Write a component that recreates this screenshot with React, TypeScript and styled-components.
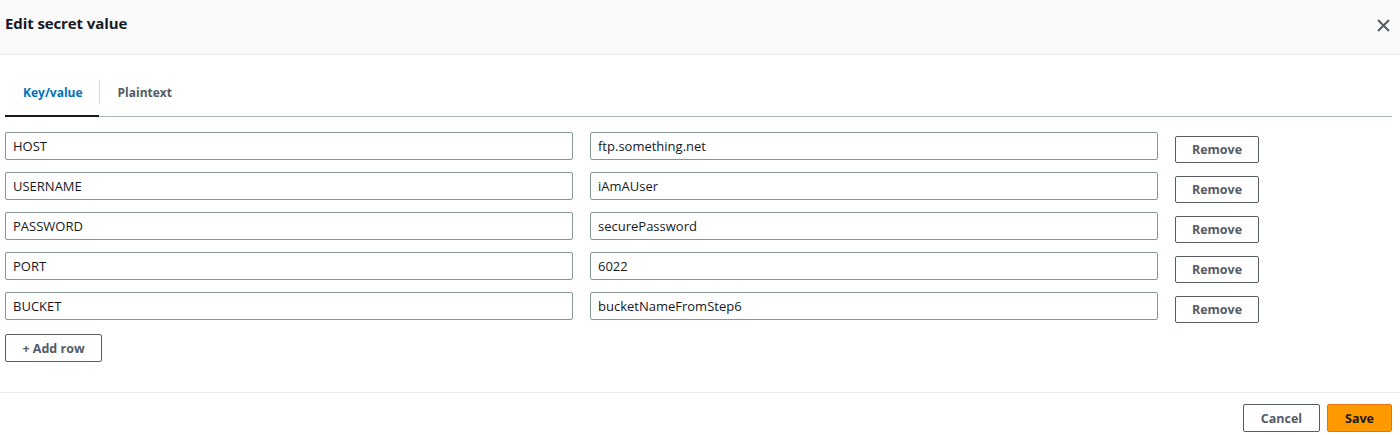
import React from "react";
import styled, { createGlobalStyle } from "styled-components";

const Global = createGlobalStyle`
  html, body { margin: 0; padding: 0; background: #ffffff; }
  body { font-family: "Open Sans", "Noto Sans", sans-serif; color: #16191f; }
  * { box-sizing: border-box; }
`;

const Modal = styled.div`
  width: 1400px;
  height: 435px;
  display: flex;
  flex-direction: column;
  background: #fff;
  overflow: hidden;
`;

const Header = styled.div`
  flex-shrink: 0;
  height: 55px;
  background: #fafafa;
  border-bottom: 1px solid #eaeded;
  display: flex;
  align-items: center;
  justify-content: space-between;
  padding: 0 9px 0 5px;
`;

const Title = styled.h2`
  margin: 0;
  font-size: 15px;
  font-weight: 700;
  color: #16191f;
  letter-spacing: -0.1px;
  padding-bottom: 8px;
`;

const CloseButton = styled.button`
  border: none;
  background: none;
  padding: 0;
  width: 16px;
  height: 16px;
  display: flex;
  align-items: center;
  justify-content: center;
  cursor: pointer;
  color: #545b64;
  margin-bottom: 4px;
`;

const Body = styled.div`
  flex-shrink: 0;
  height: 338px;
  padding: 14px 8px 0 5px;
  border-bottom: 1px solid #eaeded;
`;

const TabList = styled.div`
  display: flex;
  align-items: stretch;
  height: 48px;
  border-bottom: 1px solid #aab7b8;
`;

const Tab = styled.div<{ $active?: boolean }>`
  display: flex;
  align-items: center;
  padding: 0 16px 0 18px;
  font-size: 12px;
  font-weight: 700;
  color: ${(p) => (p.$active ? "#0073bb" : "#545b64")};
  border-bottom: 2px solid ${(p) => (p.$active ? "#16191f" : "transparent")};
  margin-bottom: -1px;
`;

const TabDivider = styled.div`
  width: 1px;
  background: #d5dbdb;
  margin: 11px 0 12px;
`;

const Rows = styled.div`
  display: flex;
  flex-direction: column;
  gap: 9px;
  margin-top: 15px;
`;

const Row = styled.div`
  display: grid;
  grid-template-columns: 568px 568px 84px;
  column-gap: 17px;
  align-items: start;
`;

const Field = styled.div`
  height: 28px;
  border: 1px solid #879596;
  border-radius: 2px;
  display: flex;
  align-items: center;
  padding: 0 7px;
  font-size: 13px;
  color: #16191f;
`;

const SecondaryButton = styled.button<{ $w?: number; $h?: number }>`
  height: ${(p) => p.$h ?? 27}px;
  width: ${(p) => p.$w ?? 84}px;
  border: 1px solid #545b64;
  border-radius: 2px;
  background: #fff;
  font-family: inherit;
  font-size: 12.5px;
  font-weight: 700;
  color: #545b64;
  display: flex;
  align-items: center;
  justify-content: center;
  padding: 0;
  cursor: pointer;
`;

const RemoveButton = styled(SecondaryButton)`
  margin-top: 4px;
`;

const AddRow = styled.div`
  margin-top: 11px;
`;

const Footer = styled.div`
  flex-shrink: 0;
  display: flex;
  justify-content: flex-end;
  align-items: flex-start;
  gap: 7px;
  padding: 11px 8px 0 0;
`;

const PrimaryButton = styled.button`
  height: 28px;
  width: 65px;
  border: 1px solid #ec7211;
  border-radius: 2px;
  background: #ff9900;
  font-family: inherit;
  font-size: 12.5px;
  font-weight: 700;
  color: #16191f;
  padding: 0;
  cursor: pointer;
`;

const rows = [
  ["HOST", "ftp.something.net"],
  ["USERNAME", "iAmAUser"],
  ["PASSWORD", "securePassword"],
  ["PORT", "6022"],
  ["BUCKET", "bucketNameFromStep6"],
];

export default function App() {
  return (
    <>
      <Global />
      <Modal>
        <Header>
          <Title>Edit secret value</Title>
          <CloseButton aria-label="Close">
            <svg width="13" height="13" viewBox="0 0 13 13">
              <path d="M1 1L12 12M12 1L1 12" stroke="#545b64" strokeWidth="2" fill="none" />
            </svg>
          </CloseButton>
        </Header>
        <Body>
          <TabList>
            <Tab $active>Key/value</Tab>
            <TabDivider />
            <Tab>Plaintext</Tab>
          </TabList>
          <Rows>
            {rows.map(([k, v]) => (
              <Row key={k}>
                <Field>{k}</Field>
                <Field>{v}</Field>
                <RemoveButton>Remove</RemoveButton>
              </Row>
            ))}
          </Rows>
          <AddRow>
            <SecondaryButton $w={97} $h={28}>+ Add row</SecondaryButton>
          </AddRow>
        </Body>
        <Footer>
          <SecondaryButton $w={77} $h={28}>Cancel</SecondaryButton>
          <PrimaryButton>Save</PrimaryButton>
        </Footer>
      </Modal>
    </>
  );
}
